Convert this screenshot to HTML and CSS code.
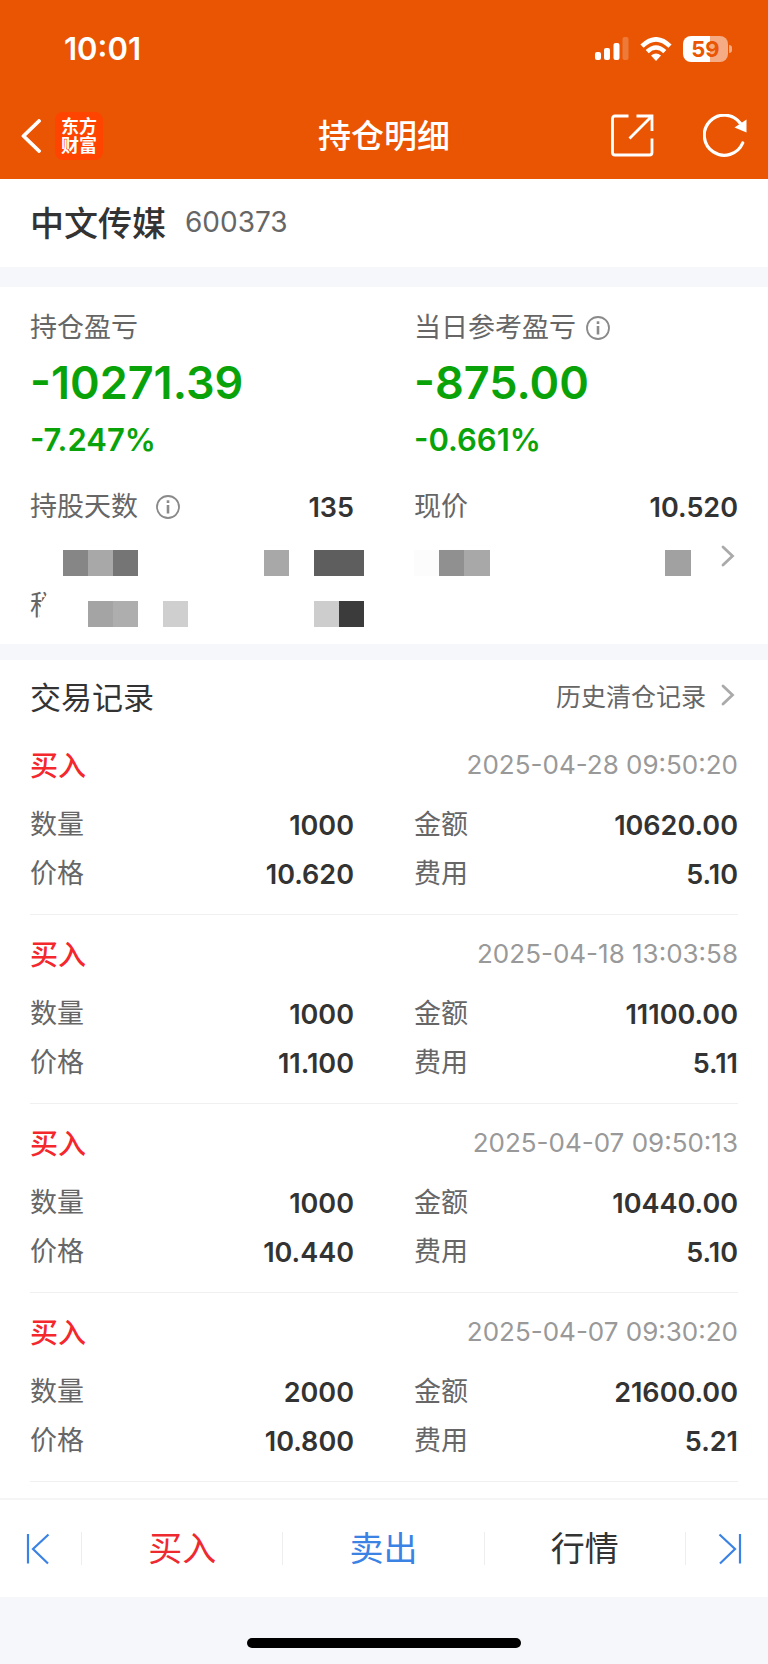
FILE: index.html
```html
<!DOCTYPE html>
<html lang="zh-CN">
<head>
<meta charset="utf-8">
<meta name="viewport" content="width=device-width, initial-scale=1">
<title>持仓明细</title>
<link rel="stylesheet" href="styles.css">
</head>
<body>
<div class="page">
  <header class="header">
    <div class="status">
      <time class="clock">10:01</time>
      <div class="status-icons">
        <svg width="34" height="24" viewBox="0 0 34 24" fill="#fff" aria-hidden="true">
          <rect x="0" y="15" width="6" height="8" rx="2"/>
          <rect x="9" y="11" width="6" height="12" rx="2"/>
          <rect x="18.500" y="6" width="6" height="17" rx="2"/>
          <rect x="27.500" y="0" width="6" height="23" rx="2" opacity=".22"/>
        </svg>
        <svg class="wifi" width="32" height="24" viewBox="0 0 32 24" aria-hidden="true">
          <path d="M2 9.200Q16-4.400 30 9.200" fill="none" stroke="#fff" stroke-width="4.600"/>
          <path d="M7.200 14.600Q16 6.400 24.800 14.600" fill="none" stroke="#fff" stroke-width="4.400"/>
          <path d="M11 18.600Q16 14.200 21 18.600L16 24Z" fill="#fff"/>
        </svg>
        <div class="battery"><span class="battery-level">59</span></div>
      </div>
    </div>
    <nav class="titlebar">
      <div class="titlebar-side">
        <button class="icon-button" type="button" aria-label="返回">
          <svg width="20" height="34" viewBox="0 0 20 34" fill="none" stroke="#fff" stroke-width="3.800" stroke-linecap="round" stroke-linejoin="round"><path d="M18 2 2.500 17 18 32"/></svg>
        </button>
        <span class="logo">东方<br>财富</span>
      </div>
      <h1 class="title">持仓明细</h1>
      <div class="titlebar-side titlebar-actions">
        <button class="icon-button" type="button" aria-label="分享">
          <svg width="43" height="43" viewBox="0 0 43 43" fill="none" stroke="#fff" stroke-width="2.800"><path d="M17.500 2H4Q1.500 2 1.500 4.500V38.500Q1.500 41 4 41H38.500Q41 41 41 38.500V24.500M25.500 2H41V17M41 2 18.500 24.500"/></svg>
        </button>
        <button class="icon-button" type="button" aria-label="刷新">
          <svg width="44" height="43" viewBox="0 0 44 43" fill="none" stroke="#fff" stroke-width="3.200"><path d="M39.700 29A20 20 0 1 1 37.500 9.500" stroke-linecap="round"/><path d="M43.500 5.500V18.500L31.500 13.500Z" fill="#fff" stroke="none"/></svg>
        </button>
      </div>
    </nav>
  </header>

  <section class="stock">
    <h2 class="stock-name">中文传媒</h2>
    <span class="stock-code">600373</span>
  </section>

  <section class="summary">
    <div class="columns">
      <div class="profit">
        <div class="label">持仓盈亏</div>
        <div class="profit-value">-10271.39</div>
        <div class="profit-rate">-7.247%</div>
      </div>
      <div class="profit">
        <div class="label">当日参考盈亏
          <svg class="info info-near" width="24" height="24" viewBox="0 0 24 24" fill="none" stroke="#8a8a8a" stroke-width="1.800"><circle cx="12" cy="12" r="11"/><path d="M12 10V18.500" stroke-width="2.600"/><path d="M12 5.300V8" stroke-width="2.600"/></svg>
        </div>
        <div class="profit-value">-875.00</div>
        <div class="profit-rate">-0.661%</div>
      </div>
    </div>
    <div class="columns holding">
      <div class="pair">
        <span class="label">持股天数
          <svg class="info" width="24" height="24" viewBox="0 0 24 24" fill="none" stroke="#8a8a8a" stroke-width="1.800"><circle cx="12" cy="12" r="11"/><path d="M12 10V18.500" stroke-width="2.600"/><path d="M12 5.300V8" stroke-width="2.600"/></svg>
        </span>
        <span class="value">135</span>
      </div>
      <div class="pair"><span class="label">现价</span><span class="value">10.520</span></div>
    </div>
    <div class="masked">
      <svg class="mask-left" width="301" height="77" viewBox="0 0 301 77" shape-rendering="crispEdges" aria-hidden="true">
        <path fill="#868686" d="M0 0h25v26H0z"/><path fill="#a8a8a8" d="M25 0h25v26H25z"/><path fill="#757575" d="M50 0h25v26H50z"/>
        <path fill="#a8a8a8" d="M201 0h25v26h-25z"/><path fill="#5e5e5e" d="M251 0h50v26h-50z"/>
        <path fill="#a4a4a4" d="M25 51h25v26H25z"/><path fill="#aeaeae" d="M50 51h25v26H50z"/><path fill="#cfcfcf" d="M100 51h25v26h-25z"/>
        <path fill="#cdcdcd" d="M251 51h25v26h-25z"/><path fill="#3b3b3b" d="M276 51h25v26h-25z"/>
      </svg>
      <span class="label mask-label">税</span>
      <svg class="mask-right" width="277" height="26" viewBox="0 0 277 26" shape-rendering="crispEdges" aria-hidden="true">
        <path fill="#fcfcfc" d="M0 0h25v26H0z"/><path fill="#909090" d="M25 0h25v26H25z"/><path fill="#a8a8a8" d="M50 0h26v26H50z"/><path fill="#a1a1a1" d="M251 0h26v26h-26z"/>
      </svg>
      <svg class="chevron mask-chevron" width="14" height="22" viewBox="0 0 14 22"><path d="M2 2 11.500 11 2 20"/></svg>
    </div>
  </section>

  <main class="records">
    <div class="records-head">
      <h2 class="records-title">交易记录</h2>
      <a class="history" href="#">历史清仓记录
        <svg class="chevron" width="14" height="22" viewBox="0 0 14 22"><path d="M2 2 11.500 11 2 20"/></svg>
      </a>
    </div>

    <article class="record">
      <div class="record-head"><h3 class="side">买入</h3><time class="date">2025-04-28 09:50:20</time></div>
      <div class="columns record-grid">
        <div class="pair"><span class="label">数量</span><span class="value">1000</span></div>
        <div class="pair"><span class="label">金额</span><span class="value">10620.00</span></div>
        <div class="pair"><span class="label">价格</span><span class="value">10.620</span></div>
        <div class="pair"><span class="label">费用</span><span class="value">5.10</span></div>
      </div>
    </article>
    <article class="record">
      <div class="record-head"><h3 class="side">买入</h3><time class="date">2025-04-18 13:03:58</time></div>
      <div class="columns record-grid">
        <div class="pair"><span class="label">数量</span><span class="value">1000</span></div>
        <div class="pair"><span class="label">金额</span><span class="value">11100.00</span></div>
        <div class="pair"><span class="label">价格</span><span class="value">11.100</span></div>
        <div class="pair"><span class="label">费用</span><span class="value">5.11</span></div>
      </div>
    </article>
    <article class="record">
      <div class="record-head"><h3 class="side">买入</h3><time class="date">2025-04-07 09:50:13</time></div>
      <div class="columns record-grid">
        <div class="pair"><span class="label">数量</span><span class="value">1000</span></div>
        <div class="pair"><span class="label">金额</span><span class="value">10440.00</span></div>
        <div class="pair"><span class="label">价格</span><span class="value">10.440</span></div>
        <div class="pair"><span class="label">费用</span><span class="value">5.10</span></div>
      </div>
    </article>
    <article class="record">
      <div class="record-head"><h3 class="side">买入</h3><time class="date">2025-04-07 09:30:20</time></div>
      <div class="columns record-grid">
        <div class="pair"><span class="label">数量</span><span class="value">2000</span></div>
        <div class="pair"><span class="label">金额</span><span class="value">21600.00</span></div>
        <div class="pair"><span class="label">价格</span><span class="value">10.800</span></div>
        <div class="pair"><span class="label">费用</span><span class="value">5.21</span></div>
      </div>
    </article>
  </main>

  <footer class="footer">
    <nav class="toolbar">
      <button class="tool tool-first" type="button" aria-label="上一个">
        <svg width="24" height="32" viewBox="0 0 24 32" fill="none" stroke="#3a82e4" stroke-width="2.200"><path d="M2 1V30.500M22.500 1.500 7 16 22 30.500"/></svg>
      </button>
      <button class="tool tool-buy" type="button">买入</button>
      <button class="tool tool-sell" type="button">卖出</button>
      <button class="tool" type="button">行情</button>
      <button class="tool tool-last" type="button" aria-label="下一个">
        <svg width="24" height="32" viewBox="0 0 24 32" fill="none" stroke="#3a82e4" stroke-width="2.200"><path d="M22 1V30.500M1.500 1.500 17 16 2 30.500"/></svg>
      </button>
    </nav>
    <div class="home-indicator"></div>
  </footer>
</div>
</body>
</html>
```
FILE: styles.css
```css
* {
  box-sizing: border-box;
}

body {
  margin: 0;
  background: #fff;
  color: #333;
  font-family: Inter, "Noto Sans CJK SC", sans-serif;
  font-size: 27px;
}

h1, h2, h3 {
  margin: 0;
  font-weight: 500;
}

svg {
  display: block;
  flex: none;
}

button {
  margin: 0;
  padding: 0;
  border: 0;
  background: none;
  color: inherit;
  font: inherit;
  cursor: pointer;
}

.page {
  display: flex;
  flex-direction: column;
  min-height: 100vh;
}

.header {
  background: #ea5503;
  color: #fff;
}

.status {
  display: flex;
  align-items: center;
  justify-content: space-between;
  height: 92px;
  padding: 5px 40px 0 64px;
}

.clock {
  font-size: 31px;
  font-weight: 600;
}

.status-icons {
  display: flex;
  align-items: center;
  gap: 11px;
}

.battery {
  position: relative;
  width: 45px;
  height: 26px;
  border-radius: 8px;
  background: linear-gradient(to right, #fff 60%, #f5ab83 60%);
  color: #ea5503;
  font-size: 22px;
  font-weight: 700;
  line-height: 26px;
  text-align: center;
}

.battery::after {
  content: "";
  position: absolute;
  top: 9px;
  right: -4px;
  width: 3px;
  height: 8px;
  border-radius: 0 3px 3px 0;
  background: #f5ab83;
}

.titlebar {
  display: grid;
  grid-template-columns: 1fr auto 1fr;
  align-items: center;
  height: 87px;
  padding: 0 21px;
}

.titlebar-side {
  display: flex;
  align-items: center;
  gap: 14px;
}

.titlebar-actions {
  justify-content: flex-end;
  gap: 49px;
}

.title {
  font-size: 33px;
  line-height: 44px;
}

.logo {
  width: 48px;
  height: 48px;
  padding-top: 5px;
  border-radius: 8px;
  background: #ff4400;
  font-size: 18px;
  font-weight: 700;
  line-height: 19px;
  text-align: center;
}

.stock {
  display: flex;
  align-items: center;
  gap: 19px;
  height: 88px;
  padding: 0 30px 3px;
}

.stock-name {
  font-size: 34px;
}

.stock-code {
  color: #666;
  font-size: 28px;
}

.summary {
  padding: 21px 30px 17px;
  border-top: 20px solid #f6f7fa;
  border-bottom: 16px solid #f6f7fa;
}

.columns {
  display: grid;
  grid-template-columns: 1fr 1fr;
  column-gap: 60px;
}

.label {
  display: flex;
  align-items: center;
  color: #666;
  line-height: 40px;
}

.info {
  margin-left: 18px;
}

.info-near {
  margin-left: 10px;
}

.profit-value,
.profit-rate {
  color: #09a309;
  font-weight: 600;
}

.profit-value {
  font-size: 45px;
  line-height: 69px;
}

.profit-rate {
  font-size: 31px;
  line-height: 46px;
}

.holding {
  margin-top: 24px;
}

.pair {
  display: flex;
  align-items: center;
  justify-content: space-between;
}

.value {
  font-weight: 600;
}

.masked {
  display: grid;
  grid-template-columns: 33px 1fr auto auto;
  align-items: start;
  margin-top: 23px;
}

.mask-left {
  grid-area: 1 / 2;
}

.mask-label {
  grid-area: 1 / 1;
  width: 20px;
  padding-top: 36px;
  clip-path: polygon(0 0, 17px 0, 17px 58%, 11px 70%, 9px 100%, 0 100%);
}

.mask-right {
  grid-area: 1 / 3;
}

.mask-chevron {
  grid-area: 1 / 4;
  margin: -5px 3px 0 30px;
}

.chevron {
  fill: none;
  stroke: #aaa;
  stroke-width: 2.8;
  stroke-linecap: round;
}

.records {
  padding: 0 30px 15px;
}

.records-head,
.record-head {
  display: flex;
  align-items: center;
  justify-content: space-between;
}

.records-head {
  height: 70px;
}

.records-title {
  font-size: 31px;
  font-weight: 400;
}

.history {
  display: flex;
  align-items: center;
  gap: 15px;
  padding-right: 3px;
  color: #666;
  font-size: 25px;
  text-decoration: none;
}

.record {
  padding: 14px 0 20px;
  border-bottom: 1px solid #f0f0f0;
}

.record-head {
  height: 40px;
}

.side {
  color: #f4272c;
  font-size: 28px;
}

.date {
  color: #999;
  font-size: 26px;
}

.record + .record {
  padding-top: 18px;
}

.record-grid {
  row-gap: 9px;
  margin-top: 21px;
}

.footer {
  margin-top: auto;
  background: #f6f7fa;
}

.toolbar {
  display: grid;
  grid-template-columns: 82px 1fr 1fr 1fr 82px;
  align-items: center;
  height: 99px;
  border-top: 2px solid #f5f5f5;
  background: #fff;
}

.tool {
  display: flex;
  align-items: center;
  justify-content: center;
  height: 33px;
  border-right: 1px solid #eee;
  font-size: 34px;
  line-height: 33px;
}

.tool-first {
  justify-content: flex-start;
  padding-left: 26px;
}

.tool-last {
  justify-content: flex-end;
  padding-right: 26px;
  border-right: 0;
}

.tool-buy {
  color: #ee2a30;
}

.tool-sell {
  color: #3a82e4;
}

.home-indicator {
  width: 274px;
  height: 10px;
  margin: 41px auto 16px;
  border-radius: 5px;
  background: #000;
}
```
